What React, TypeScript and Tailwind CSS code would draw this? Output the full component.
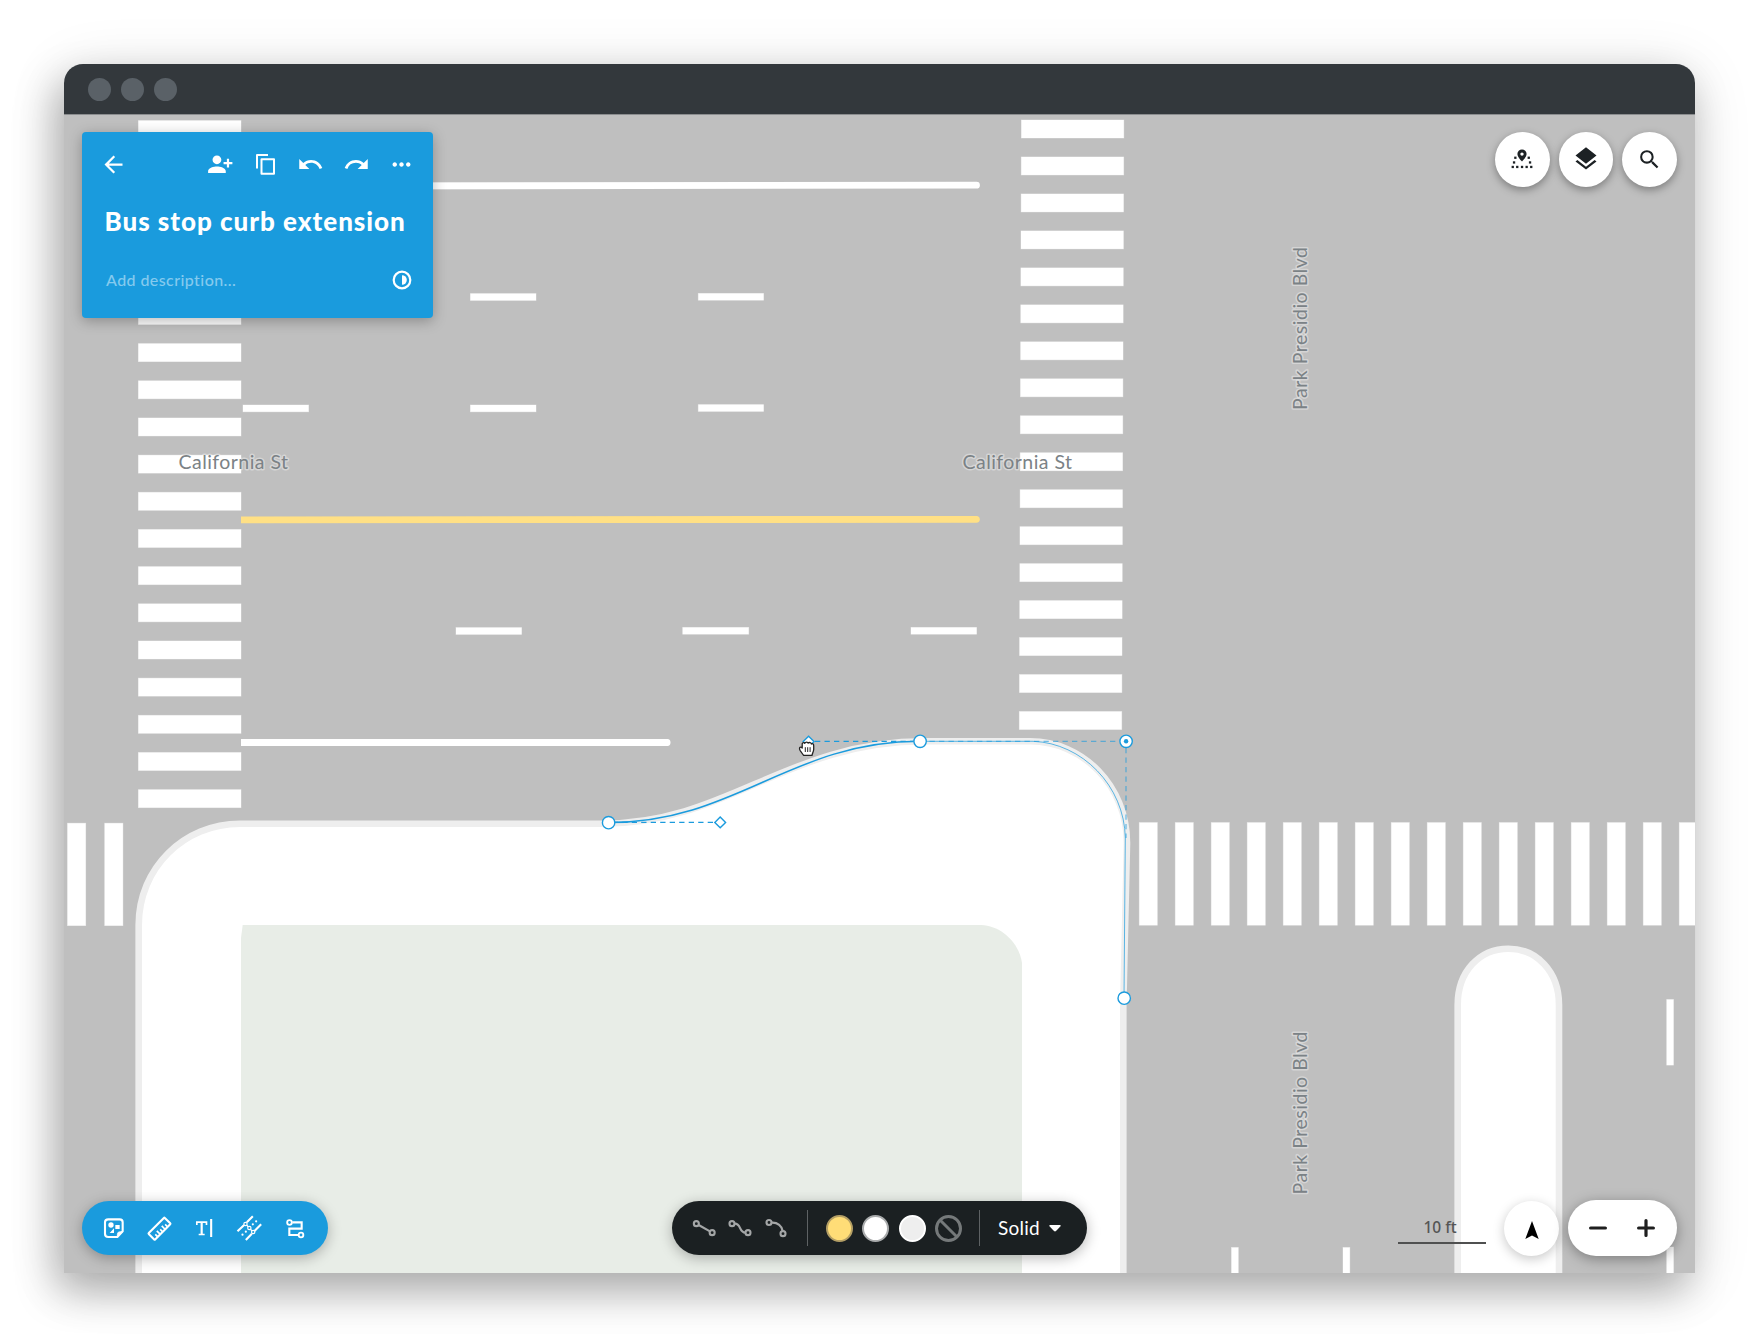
import type { ReactNode } from 'react';
import {
  MdArrowBack,
  MdLayers,
  MdMoreHoriz,
  MdPersonAddAlt1,
  MdRedo,
  MdSearch,
  MdUndo,
} from 'react-icons/md';

const range = (n: number) => Array.from({ length: n }, (_, i) => i);

const CURB_SHAPE =
  'M138.7 1290 V925 C138.7 868 184 823.7 240 823.7 H603 C728 823.7 786 741.3 925 741.3 H1030 C1083 741.3 1127 786 1127 843 L1123.3 1005 V1290 Z';
const EDGE_LEFT = 'M608.5 822.6 C736 822.6 790 741.3 920 741.3';
const EDGE_RIGHT = 'M920 741.3 H1033 C1082 743 1124.5 786 1125.3 838 L1124 998';

const DASHES: [number, number, number, number][] = [
  [470.4, 293.6, 65.6, 6.8],
  [698.3, 293.4, 65.3, 6.8],
  [243, 405, 65.6, 6.8],
  [470.4, 405, 65.6, 6.8],
  [698.3, 404.6, 65.3, 6.8],
  [456, 627.6, 65.6, 6.8],
  [682.7, 627.4, 66, 6.8],
  [911, 627.4, 65.6, 6.8],
  [1666.7, 999.5, 6.8, 65.6],
  [1666.7, 1247, 6.8, 40],
  [1231.5, 1247.5, 6.8, 40],
  [1343, 1247.5, 6.8, 40],
];

function StreetLabel({ x, y, width, vertical, children }: { x: number; y: number; width: number; vertical?: boolean; children: string }) {
  return (
    <text
      x={x}
      y={y}
      textLength={width}
      transform={vertical ? `rotate(-90 ${x} ${y})` : undefined}
      className="fill-[#7b8286] stroke-white/35 stroke-[3px] font-[Lato,sans-serif] text-[19.5px] font-normal [paint-order:stroke] [stroke-linejoin:round]"
    >
      {children}
    </text>
  );
}

function StreetMap() {
  return (
    <svg viewBox="64 114 1631 1159" width="1631" height="1159" className="absolute inset-0 block">
      <rect x="64" y="114" width="1631" height="1159" fill="#bfbfbf" />
      <g fill="#fff" stroke="#fff" strokeOpacity="0.45" strokeWidth="0.8">
        {range(19).map((k) => (
          <rect key={k} x="138.4" y={120.6 + 37.17 * k} width="102.6" height="18" />
        ))}
        {range(17).map((k) => (
          <rect key={k} x={1021.4 - 0.13 * k} y={120 + 36.97 * k} width="102.4" height="18" />
        ))}
        {range(2).map((k) => (
          <rect key={k} x={67.5 + 37.2 * k} y="823.2" width="18.2" height="102.4" />
        ))}
        {range(16).map((k) => (
          <rect key={k} x={1139.3 + 36 * k} y="822.6" width="18" height="102.6" />
        ))}
        {DASHES.map(([x, y, w, h]) => (
          <rect key={`${x}-${y}`} x={x} y={y} width={w} height={h} />
        ))}
      </g>
      <path d="M300 186 L976.5 185.2" stroke="#fff" strokeWidth="6.8" strokeLinecap="round" />
      <path d="M241 516.4 L976.5 515.9 Q979.8 516 979.8 519.3 Q979.8 522.7 976.5 522.8 L241 523.2 Z" fill="#ffe085" />
      <path d="M241 739 H667.5 Q670.5 739.2 670.5 742.4 Q670.5 745.8 667.5 746 H241 Z" fill="#fff" />

      <path d={CURB_SHAPE} fill="#fff" stroke="#eee" strokeWidth="6.6" />
      <path d="M1457.7 1290 V1005 C1457.7 971 1480 948.7 1508.3 948.7 C1536 948.7 1559 971 1559 1005 V1290" fill="#fff" stroke="#eee" strokeWidth="6.6" />
      <path d="M241 1280 V938 L242.7 925 H981 C1004 926 1020 946 1022 963 V1280 Z" fill="#e8ede7" />

      <StreetLabel x={178.5} y={469} width={109.5}>California St</StreetLabel>
      <StreetLabel x={962.5} y={469} width={109.5}>California St</StreetLabel>
      <StreetLabel x={1307} y={410} width={163} vertical>Park Presidio Blvd</StreetLabel>
      <StreetLabel x={1307} y={1194.5} width={163} vertical>Park Presidio Blvd</StreetLabel>

      <g fill="none" stroke="#1b9bdd">
        <path d={EDGE_RIGHT} strokeWidth="1" strokeOpacity="0.7" />
        <path d={EDGE_LEFT} strokeWidth="1.5" />
        <path d="M920 741.3 H1119 M1126 748 V838" strokeWidth="1.3" strokeOpacity="0.6" strokeDasharray="5.3 4.2" />
        <path d="M815 741.3 H914 M713 822.4 H615" strokeWidth="1.3" strokeDasharray="5.3 4.2" />
      </g>
      <g fill="#fff" stroke="#1b9bdd" strokeWidth="1.4">
        <circle cx="608.6" cy="822.7" r="6.2" />
        <circle cx="920.1" cy="741.3" r="6.2" />
        <circle cx="1126.1" cy="741.3" r="6.2" />
        <circle cx="1124.2" cy="998.2" r="6.2" />
        <path d="M720.2 817 L725.6 822.4 L720.2 827.8 L714.8 822.4 Z" />
        <path d="M808.6 736.2 L814 741.6 L808.6 747 L803.2 741.6 Z" />
      </g>
      <circle cx="1126.1" cy="741.3" r="2.2" fill="#1b9bdd" />
      <g stroke="#222" strokeWidth="1.3" strokeLinejoin="round" strokeLinecap="round">
        <path
          d="M803.3 755 L800.2 750.6 C798.8 748.4 799.6 746.6 801.6 747.3 L802.2 748 V745 C801.8 742.6 803.8 741.9 804.8 743.3 C805.4 741.6 807.8 741.8 808.2 743.2 C809.2 742 811.2 742.4 811.4 744 C812.8 743.2 813.8 744.2 813.7 746 V749.5 C813.4 752 812.4 753.2 812 755.4 H803.8 Z"
          fill="#fff"
        />
        <path d="M805.3 747.6 V751.6 M807.7 747.6 V751.6 M810.1 747.6 V751.6" strokeWidth="1" />
      </g>
    </svg>
  );
}

/* Toolbar glyphs share one drawing space, three units to the pixel. */
function Glyph({ x, children }: { x: number; children: ReactNode }) {
  return (
    <svg viewBox={`${x} 99 90 90`} width="30" height="30" fill="none" stroke="currentColor" strokeWidth="6.3" className="block shrink-0">
      {children}
    </svg>
  );
}

function ProjectCard() {
  return (
    <div className="flex h-[185.5px] w-[351px] flex-col rounded-[4px] bg-[#1a9bdd] text-white shadow-[0_3px_14px_rgba(0,0,0,0.28)]">
      <div className="mt-[18.5px] flex h-[27px] items-center pl-[17.5px] pr-[18px]">
        <MdArrowBack size={27} />
        <div className="ml-auto flex items-center gap-[18.5px]">
          <MdPersonAddAlt1 size={26.5} />
          <span className="flex w-[27px] justify-center">
            <svg viewBox="0 0 19 21" width="19" height="21" fill="none" stroke="currentColor" strokeWidth="2" strokeLinejoin="round">
              <path d="M1 14.500 V1 H12" />
              <rect x="5.500" y="5.300" width="12.500" height="14.500" />
            </svg>
          </span>
          <MdUndo size={27} />
          <MdRedo size={27} />
          <MdMoreHoriz size={27} />
        </div>
      </div>
      <div className="mt-[25.5px] h-9 whitespace-nowrap pl-[22.5px] font-[Lato] text-[26px] font-black leading-9 tracking-[0.98px]">
        Bus stop curb extension
      </div>
      <div className="mt-[29px] flex h-6 items-center justify-between pl-6 pr-[21.5px]">
        <span className="whitespace-nowrap font-[Lato] text-base font-medium tracking-[0.42px] text-[#85caee]">Add description...</span>
        <svg viewBox="0 0 20 20" width="20" height="20">
          <circle cx="10" cy="10" r="8.3" fill="none" stroke="#fff" strokeWidth="2.200" />
          <path d="M10 5.2 A4.8 4.8 0 0 1 10 14.8 Z" fill="#fff" />
        </svg>
      </div>
    </div>
  );
}

function RoundButton({ children }: { children: ReactNode }) {
  return (
    <div className="flex size-[54.5px] items-center justify-center rounded-full bg-white text-[#1c2124] shadow-[0_3px_9px_rgba(0,0,0,0.35)]">
      {children}
    </div>
  );
}

function MapButtons() {
  return (
    <div className="mr-[0.5px] flex gap-[9px]">
      <RoundButton>
        <svg viewBox="0 0 22 20" width="22" height="20" fill="currentColor">
          <path fillRule="evenodd" d="M11 0.5 a4.6 4.6 0 0 1 4.6 4.6 C15.6 8.2 11 12.6 11 12.6 C11 12.6 6.4 8.2 6.4 5.1 A4.6 4.6 0 0 1 11 0.5 Z M11 3.4 a1.7 1.7 0 1 0 0 3.4 a1.7 1.7 0 0 0 0 -3.4 Z" />
          {[[3.2, 7.6], [16.600, 7.6], [1.9, 12.3], [17.900, 12.3], [0.6, 16.8], [5.1, 16.8], [9.9, 16.8], [14.5, 16.8], [19.1, 16.8]].map(([x, y]) => (
            <rect key={`${x}-${y}`} x={x} y={y} width="2.3" height="2.3" />
          ))}
        </svg>
      </RoundButton>
      <RoundButton><MdLayers size={28} /></RoundButton>
      <RoundButton><MdSearch size={25} /></RoundButton>
    </div>
  );
}

function ToolPalette() {
  return (
    <div className="flex h-[54px] w-[246px] items-center gap-[15.17px] rounded-full bg-[#1a9bdd] pl-[17px] text-white shadow-[0_3px_14px_rgba(0,0,0,0.28)]">
      <Glyph x={87}>
        <path d="M142 171 H115 Q105 171 105 161 V127 Q105 118 115 118 H149 Q158 118 158 127 V154 Z" strokeLinejoin="round" />
        <path d="M142 171 V163 Q142 155 150 155 H158 Z" fill="currentColor" strokeWidth="2" />
        <circle cx="123" cy="135" r="8" fill="currentColor" stroke="none" />
        <path d="M136 135 H149 V147 H136 Z M119 159 L132 145 V159 Z" fill="currentColor" stroke="none" />
      </Glyph>
      <Glyph x={222.5}>
        <g transform="rotate(-45 269 146)">
          <rect x="235" y="132.5" width="68" height="27" rx="2" />
          <path d="M248 159 V149 M258.5 159 V145 M269 159 V149 M279.5 159 V145 M290 159 V149" strokeWidth="5" />
        </g>
      </Glyph>
      <Glyph x={358}>
        <path d="M381.5 135 V126.5 H410.5 V135 M387 163.5 H405" strokeWidth="5" />
        <path d="M396 126.5 V163.5" strokeWidth="6.5" />
        <path d="M424.5 117 V171" />
      </Glyph>
      <Glyph x={493.5}>
        <path d="M504 154 L524 135 M532 127 L550 109 M529 180 L547 161 M555 153 L575 133" />
        <path d="M532 136 L536 140 M543 148 L547 152" strokeWidth="4" />
        <circle cx="528" cy="132" r="5" strokeWidth="3.5" />
        <circle cx="539.5" cy="144" r="5" strokeWidth="3.5" />
        <circle cx="551" cy="156" r="5" strokeWidth="3.5" />
        <g fill="currentColor" stroke="none">
          <circle cx="519" cy="164" r="3.3" />
          <circle cx="529" cy="155" r="3.3" />
          <circle cx="550" cy="133" r="3.3" />
          <circle cx="560" cy="124" r="3.3" />
        </g>
      </Glyph>
      <Glyph x={629}>
        <path d="M666 127 H694 V146 H657 V165 H683" />
        <circle cx="657.5" cy="127.5" r="7" strokeWidth="5.5" />
        <circle cx="692" cy="165" r="7" strokeWidth="5.5" />
      </Glyph>
    </div>
  );
}

function StyleBar() {
  return (
    <div className="flex h-[54px] w-[415px] items-center rounded-full bg-[#1b2022] pl-[16.7px] shadow-[0_3px_14px_rgba(0,0,0,0.28)]">
      <div className="flex gap-[6.33px] text-[#a4a6a7]">
        <Glyph x={86}>
          <circle cx="108" cy="131" r="7.5" />
          <circle cx="155.5" cy="158" r="7.5" />
          <path d="M115 135 L149 154" />
        </Glyph>
        <Glyph x={195}>
          <circle cx="216" cy="131" r="7.5" />
          <circle cx="264" cy="158" r="7.5" />
          <path d="M224 131 C244 130 236 157 256 158" />
        </Glyph>
        <Glyph x={304}>
          <circle cx="328" cy="127.5" r="7.5" />
          <circle cx="370" cy="161" r="7.5" />
          <path d="M336 128 C354 127 367 138 369 153" />
        </Glyph>
      </div>
      <div className="ml-[15.5px] h-9 w-px bg-[#5e6264]" />
      <div className="ml-[18px] flex gap-[9.4px]">
        <div className="size-[27px] rounded-full border-[2px] border-[#b49f65] bg-[#ffdd77]" />
        <div className="size-[27px] rounded-full border-[2px] border-[#a9abac] bg-white" />
        <div className="size-[27px] rounded-full border-[2px] border-white bg-[#eee]" />
        <svg viewBox="0 0 27 27" width="27" height="27" fill="none" stroke="#75797a" strokeWidth="3">
          <circle cx="13.5" cy="13.5" r="12" />
          <path d="M5 5 L22 22" />
        </svg>
      </div>
      <div className="ml-[17px] h-9 w-px bg-[#5e6264]" />
      <span className="ml-[18px] font-[Lato] text-[19px] leading-6 tracking-[0.25px] text-white">Solid</span>
      <svg viewBox="0 0 12 7" width="12" height="7" className="ml-[9px] fill-white">
        <path d="M1.2 0 H10.8 Q12.4 0.3 11.3 1.6 L7 6 Q6 6.8 5 6 L0.7 1.6 Q-0.4 0.3 1.2 0 Z" />
      </svg>
    </div>
  );
}

function ViewControls() {
  return (
    <div className="flex items-center">
      <div className="mr-[18px] flex h-[31px] w-[88px] flex-col items-center border-b-2 border-[#4f5050] pr-[4px] font-['Noto_Sans'] text-[15.5px] font-medium leading-[29px] text-[#555]">
        10 ft
      </div>
      <div className="mr-[8.5px] flex size-[55px] items-center justify-center rounded-full bg-white shadow-[0_3px_12px_rgba(0,0,0,0.22)]">
        <svg viewBox="0 0 14 20" width="14" height="20" className="ml-[1px] mt-[4px]">
          <path d="M7 1 L13.7 19 L7 15.4 L0.3 19 Z" fill="#000" />
        </svg>
      </div>
      <div className="flex h-[56px] w-[109.5px] items-center justify-center gap-[29.5px] rounded-full bg-white pr-[1px] text-[#1f1f1f] shadow-[0_3px_14px_rgba(0,0,0,0.35)]">
        <svg viewBox="0 0 18 18" width="18" height="18" stroke="currentColor" strokeWidth="3.2" strokeLinecap="round">
          <path d="M1.6 9 H16.4" />
        </svg>
        <svg viewBox="0 0 18 18" width="18" height="18" stroke="currentColor" strokeWidth="3.2" strokeLinecap="round">
          <path d="M1.6 9 H16.4 M9 1.6 V16.4" />
        </svg>
      </div>
    </div>
  );
}

export default function App() {
  return (
    <div className="h-[1338px] w-[1760px] overflow-hidden bg-white pl-16 pt-16 antialiased">
      <div className="h-[1209px] w-[1631px] overflow-hidden rounded-t-[19px] shadow-[0_8px_60px_rgba(0,0,0,0.12),-8px_18px_40px_rgba(0,0,0,0.28)]">
        <div className="flex h-[50px] items-center gap-[10px] bg-[#33383c] pl-[23.5px]">
          <span className="size-[23px] rounded-full bg-[#5a6167]" />
          <span className="size-[23px] rounded-full bg-[#5a6167]" />
          <span className="size-[23px] rounded-full bg-[#5a6167]" />
        </div>
        <div className="relative h-[1159px]">
          <StreetMap />
          <div className="relative flex h-full flex-col justify-between border-t border-[#8b8d8f] pb-[17px] pl-[18px] pr-[18px] pt-[17px]">
            <div className="flex items-start justify-between">
              <ProjectCard />
              <MapButtons />
            </div>
            <div className="flex items-center">
              <ToolPalette />
              <div className="ml-[344px]"><StyleBar /></div>
              <div className="ml-auto"><ViewControls /></div>
            </div>
          </div>
        </div>
      </div>
    </div>
  );
}
